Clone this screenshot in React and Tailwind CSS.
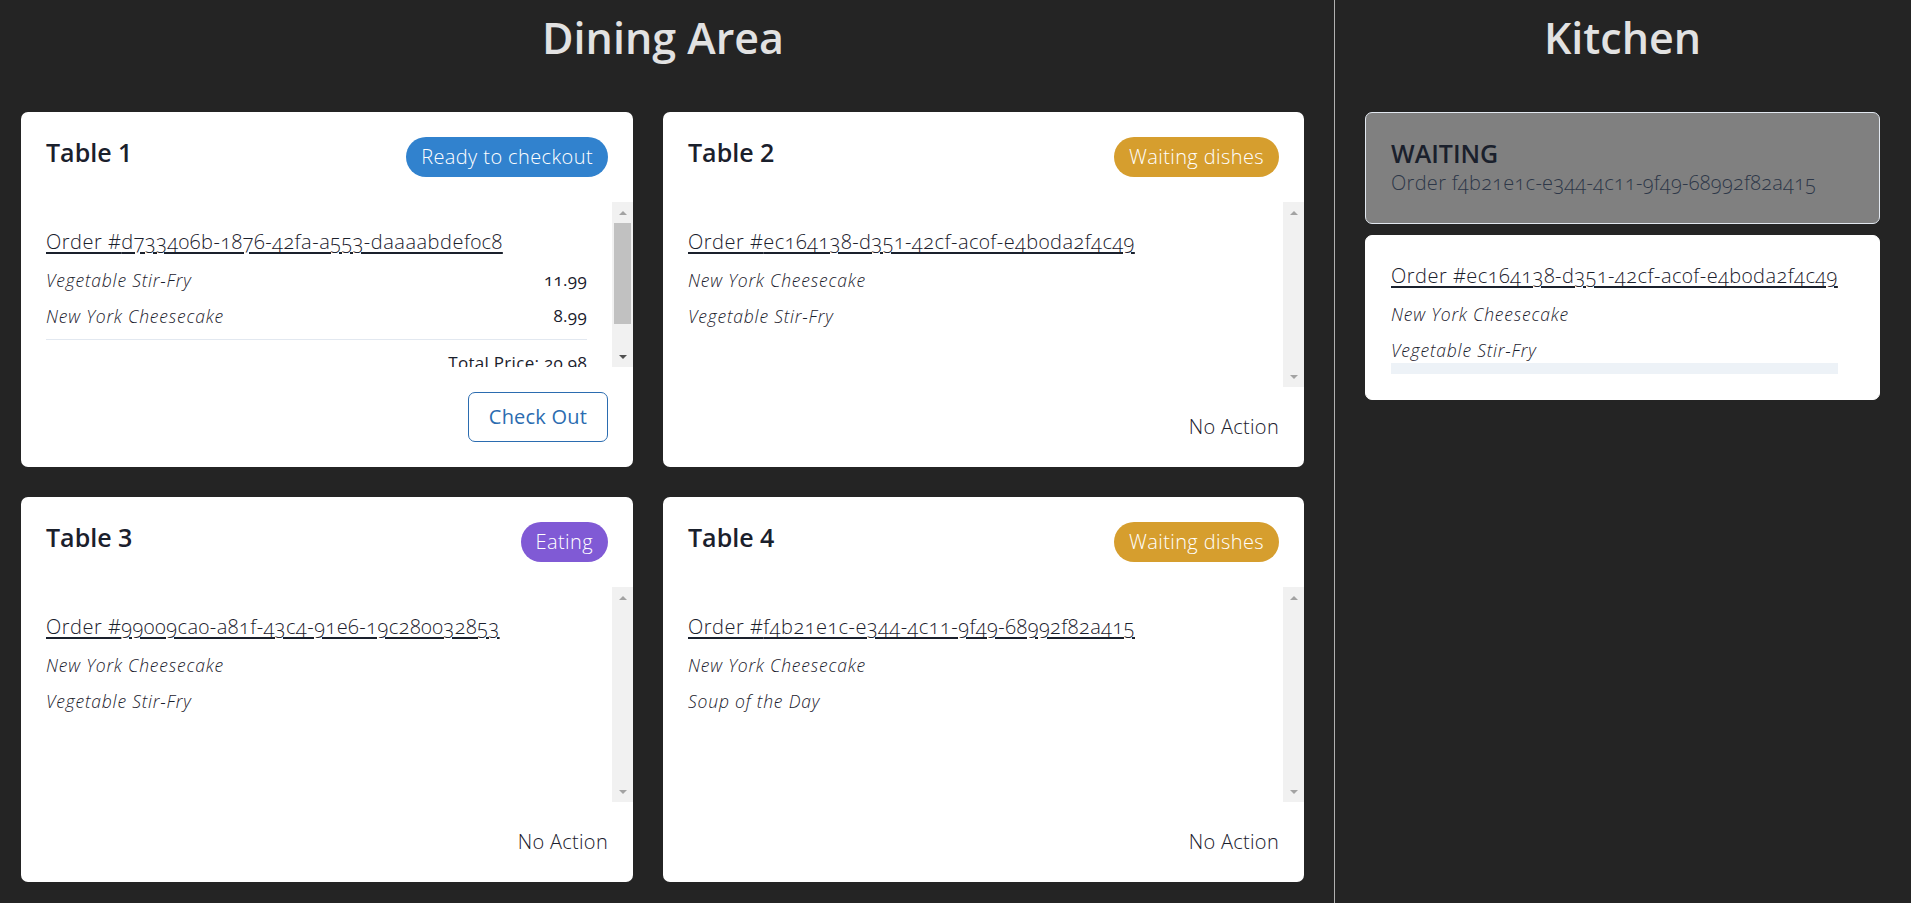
const tables = [
  {
    name: 'Table 1',
    status: 'Ready to checkout',
    badge: 'bg-[#3182ce]',
    order: 'd733406b-1876-42fa-a553-daaaabdef0c8',
    items: [
      ['Vegetable Stir-Fry', '11.99'],
      ['New York Cheesecake', '8.99'],
    ],
    total: '20.98',
    checkout: true,
  },
  {
    name: 'Table 2',
    status: 'Waiting dishes',
    badge: 'bg-[#d69e2e]',
    order: 'ec164138-d351-42cf-ac0f-e4b0da2f4c49',
    items: [['New York Cheesecake'], ['Vegetable Stir-Fry']],
  },
  {
    name: 'Table 3',
    status: 'Eating',
    badge: 'bg-[#805ad5]',
    order: '99009ca0-a81f-43c4-91e6-19c280032853',
    items: [['New York Cheesecake'], ['Vegetable Stir-Fry']],
  },
  {
    name: 'Table 4',
    status: 'Waiting dishes',
    badge: 'bg-[#d69e2e]',
    order: 'f4b21e1c-e344-4c11-9f49-68992f82a415',
    items: [['New York Cheesecake'], ['Soup of the Day']],
  },
];

const heading = "font-['Open_Sans',sans-serif] lining-nums tracking-normal";

// drawn scrollbar so it matches the 21px classic bar in the screenshot
const ScrollRail = ({ thumb }) => (
  <div className="flex w-[21px] shrink-0 flex-col bg-[#f1f1f1]">
    <div className="flex h-[21px] items-center justify-center">
      <div className="h-0 w-0 border-x-[4px] border-b-[4px] border-x-transparent border-b-[#a3a3a3]" />
    </div>
    <div className="flex-1 px-[2px]">
      {thumb && <div className="h-[101px] bg-[#c1c1c1]" />}
    </div>
    <div className="flex h-[21px] items-center justify-center">
      <div
        className={`h-0 w-0 border-x-[4px] border-t-[4px] border-x-transparent ${
          thumb ? 'border-t-[#505050]' : 'border-t-[#a3a3a3]'
        }`}
      />
    </div>
  </div>
);

const OrderBlock = ({ order, items, total }) => (
  <div className="flex flex-col gap-[10px]">
    <a className="text-[20px] font-light leading-[30px] tracking-[0.5px] underline underline-offset-[3px]">
      Order #{order}
    </a>
    {items.map(([dish, price]) => (
      <div key={dish} className="flex items-center justify-between text-[17.5px] leading-[26px]">
        <span className="font-light italic tracking-[0.8px] text-[#1a202c]">{dish}</span>
        {price && <span className="text-[17px] tracking-[0.3px]">{price}</span>}
      </div>
    ))}
    {total && (
      <>
        <div className="h-px bg-[#e2e8f0]" />
        <div className="text-right text-[17px] leading-[26px] tracking-[0.3px]">Total Price: {total}</div>
      </>
    )}
  </div>
);

const TableCard = ({ t }) => (
  <div className="flex h-full flex-col gap-[25px] rounded-[7px] bg-white py-[25px] pl-[25px]">
    <div className="flex items-start justify-between pr-[25px]">
      <h2 className={`${heading} text-[25px] font-semibold leading-[30px]`}>{t.name}</h2>
      <span
        className={`flex h-[40px] items-center rounded-full px-[15px] text-[20px] font-light tracking-[0.4px] text-white ${t.badge}`}
      >
        {t.status}
      </span>
    </div>
    <div className="flex min-h-0 flex-1">
      <div className="min-w-0 flex-1 overflow-y-auto pr-[25px] pt-[25px] [scrollbar-width:none]">
        <OrderBlock order={t.order} items={t.items} total={t.total} />
      </div>
      <ScrollRail thumb={t.checkout} />
    </div>
    <div className="flex justify-end pr-[25px]">
      {t.checkout ? (
        <button className="h-[50px] rounded-[7px] border border-[#2b6cb0] px-[20px] text-[20px] tracking-[0.2px] text-[#2b6cb0]">
          Check Out
        </button>
      ) : (
        <span className="text-[20px] font-light leading-[30px] tracking-[0.3px]">No Action</span>
      )}
    </div>
  </div>
);

export default function App() {
  return (
    <div className="flex min-h-screen bg-[#242424] font-['Open_Sans',sans-serif] text-[#1a202c] oldstyle-nums">
      {/* Dining area */}
      <section className="w-[1335px] shrink-0 border-r border-[#b0b0b0] pb-[21px] pt-[11px]">
        <h1 className={`${heading} mb-[47px] pr-[8px] text-center text-[43px] font-semibold leading-[54px] text-[#e2e2e2]`}>
          Dining Area
        </h1>
        <div className="grid grid-cols-[612px_641px] grid-rows-[355px_385px] gap-[30px] pl-[21px]">
          {tables.map((t) => (
            <TableCard key={t.name} t={t} />
          ))}
        </div>
      </section>

      {/* Kitchen */}
      <section className="flex-1 pl-[30px] pr-[31px] pt-[11px]">
        <h1 className={`${heading} mb-[47px] text-center text-[43px] font-semibold leading-[54px] text-[#e2e2e2]`}>
          Kitchen
        </h1>
        <div className="flex flex-col gap-[11px]">
          <div className="rounded-[7px] border border-[#e2e8f0] bg-[#808080] p-[25px]">
            <h3 className={`${heading} text-[25px] font-semibold leading-[30px] text-[#1a202c]`}>WAITING</h3>
            <p className="text-[20px] font-light leading-[30px] tracking-[0.3px] text-[#2d3748]">
              Order f4b21e1c-e344-4c11-9f49-68992f82a415
            </p>
          </div>
          <div className="rounded-[7px] border border-white bg-white p-[25px]">
            <div className="inline-flex flex-col">
              <div className="flex flex-col gap-[10px]">
                <a className="text-[20px] font-light leading-[30px] tracking-[0.5px] underline underline-offset-[3px]">
                  Order #ec164138-d351-42cf-ac0f-e4b0da2f4c49
                </a>
                <span className="text-[17.5px] font-light italic leading-[26px] tracking-[0.8px]">New York Cheesecake</span>
                <span className="text-[17.5px] font-light italic leading-[26px] tracking-[0.8px]">Vegetable Stir-Fry</span>
              </div>
              <div className="h-[11px] bg-[#edf2f7]" />
            </div>
          </div>
        </div>
      </section>
    </div>
  );
}
